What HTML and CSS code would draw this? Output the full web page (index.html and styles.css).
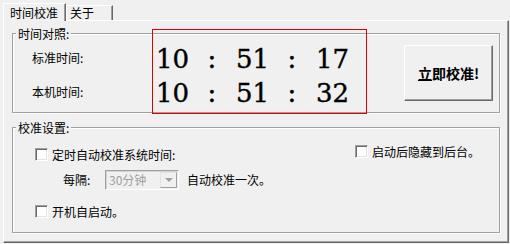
FILE: index.html
```html
<!DOCTYPE html>
<html>
<head>
    <title>时间校准</title>
    <link rel="stylesheet" href="styles.css">
</head>
<body>
    <!-- Tab strip -->
    <div class="tabs">
        <div class="tab active">时间校准</div>
        <div class="tab">关于</div>
    </div>

    <div class="panel">
        <!-- Time compare group -->
        <div class="group group-time">
            <span class="legend">时间对照:</span>
            <div class="labels">
                <div>标准时间:</div>
                <div>本机时间:</div>
            </div>
            <div class="clock">
                <div class="clock-row">
                    <span class="num">10</span><span class="sep">:</span>
                    <span class="num">51</span><span class="sep">:</span>
                    <span class="num">17</span>
                </div>
                <div class="clock-row">
                    <span class="num">10</span><span class="sep">:</span>
                    <span class="num">51</span><span class="sep">:</span>
                    <span class="num">32</span>
                </div>
            </div>
            <button class="btn-sync"><u>立</u>即校准!</button>
        </div>

        <!-- Settings group -->
        <div class="group group-settings">
            <span class="legend">校准设置:</span>
            <div class="row row-first">
                <label class="opt opt-auto"><input type="checkbox" class="chk">定时自动校准系统时间:</label>
                <label class="opt opt-hide"><input type="checkbox" class="chk">启动后隐藏到后台。</label>
            </div>
            <div class="row row-interval">
                <span class="interval-label">每隔:</span>
                <div class="combo">
                    <span class="combo-text">30分钟</span>
                    <span class="combo-btn"><span class="arrow"></span></span>
                </div>
                <span class="interval-after">自动校准一次。</span>
            </div>
            <div class="row row-boot">
                <label class="opt"><input type="checkbox" class="chk">开机自启动。</label>
            </div>
        </div>
    </div>
</body>
</html>
```

FILE: styles.css
```css
body {
    margin: 0;
    padding: 0;
    width: 510px;
    height: 244px;
    overflow: hidden;
    background: #f0f0f0;
    font-family: "Noto Sans CJK SC", sans-serif;
    font-size: 12px;
    line-height: 14px;
    color: #000;
}

/* Tabs */
.tabs {
    display: flex;
    align-items: flex-end;
    height: 20px;
    padding-left: 3px;
}
.tab {
    box-sizing: border-box;
    height: 15px;
    width: 47px;
    padding-left: 3px;
    border-top: 1px solid #fff;
    border-left: 1px solid #fff;
    border-right: 1px solid #696969;
    box-shadow: inset -1px 0 #a0a0a0;
    line-height: 14px;
}
.tab.active {
    position: relative;
    z-index: 1;
    width: 63px;
    height: 18px;
    margin-bottom: -1px;
    padding-left: 6px;
    padding-top: 2px;
    background: #f0f0f0;
}

/* Tab panel */
.panel {
    box-sizing: border-box;
    margin-left: 3px;
    width: 506px;
    height: 223px;
    border-top: 1px solid #fff;
    border-left: 1px solid #fff;
    border-right: 1px solid #696969;
    border-bottom: 1px solid #696969;
    box-shadow: inset -1px -1px #a0a0a0;
    padding-left: 8px;
    padding-top: 12px;
}

/* Group boxes (etched) */
.group {
    position: relative;
    box-sizing: border-box;
    width: 488px;
    border: 1px solid #a0a0a0;
    box-shadow: inset 1px 1px #fff, 1px 1px #fff;
}
.legend {
    position: absolute;
    top: -7px;
    left: 3px;
    padding: 0 2px;
    background: #f0f0f0;
}

.group-time {
    display: flex;
    align-items: flex-start;
    height: 80px;
    padding-left: 19px;
}
.labels {
    width: 120px;
    padding-top: 17px;
}
.labels div + div {
    margin-top: 20px;
}

/* Clock display */
.clock {
    box-sizing: border-box;
    width: 215px;
    height: 85px;
    margin-top: -5px;
    border: 1px solid #e00000;
    padding: 12px 0 0 3px;
    font-family: "DejaVu Serif", serif;
    font-size: 26px;
    line-height: 34px;
    -webkit-text-stroke: 0.4px #000;
}
.clock-row {
    display: flex;
}
.clock-row .num {
    width: 32px;
}
.clock-row .sep {
    width: 48px;
    text-align: center;
}

/* Sync button */
.btn-sync {
    box-sizing: border-box;
    width: 89px;
    height: 56px;
    margin: 11px 0 0 37px;
    padding: 0;
    background: #f0f0f0;
    border: 1px solid;
    border-color: #fff #696969 #696969 #fff;
    box-shadow: inset -1px -1px #a0a0a0;
    font-family: "Noto Sans CJK SC", sans-serif;
    font-size: 14px;
    font-weight: bold;
    color: #000;
}

/* Settings group */
.group-settings {
    height: 106px;
    margin-top: 14px;
    padding-top: 20px;
    display: flex;
    flex-direction: column;
}
.row {
    display: flex;
    align-items: center;
}
.row-first {
    align-items: flex-start;
    padding-left: 22px;
}
.opt {
    display: flex;
    align-items: center;
    height: 13px;
}
.opt-auto {
    width: 320px;
}
.opt-hide {
    margin-top: -3px;
}
.row-interval {
    height: 20px;
    margin-top: 9px;
    padding-left: 50px;
}
.interval-label {
    width: 42px;
}
.interval-after {
    margin-left: 8px;
}
.row-boot {
    margin-top: 15px;
    padding-left: 22px;
}

/* Checkbox */
.chk {
    appearance: none;
    -webkit-appearance: none;
    box-sizing: border-box;
    width: 13px;
    height: 13px;
    margin: 0 4px 0 0;
    background: #fff;
    border: 1px solid;
    border-color: #a0a0a0 #fff #fff #a0a0a0;
    box-shadow: inset 1px 1px #696969, inset -1px -1px #e3e3e3;
}

/* Disabled combo box */
.combo {
    box-sizing: border-box;
    display: flex;
    align-items: center;
    justify-content: space-between;
    width: 74px;
    height: 20px;
    border: 1px solid;
    border-color: #a0a0a0 #fff #fff #a0a0a0;
    box-shadow: inset 1px 1px #d4d4d4;
    padding: 1px;
}
.combo-text {
    padding-left: 2px;
    color: #a0a0a0;
}
.combo-btn {
    box-sizing: border-box;
    display: flex;
    align-items: center;
    justify-content: center;
    width: 17px;
    height: 16px;
    border: 1px solid;
    border-color: #e3e3e3 #a0a0a0 #a0a0a0 #e3e3e3;
}
.arrow {
    width: 0;
    height: 0;
    border-left: 4px solid transparent;
    border-right: 4px solid transparent;
    border-top: 4px solid #a0a0a0;
}
```
